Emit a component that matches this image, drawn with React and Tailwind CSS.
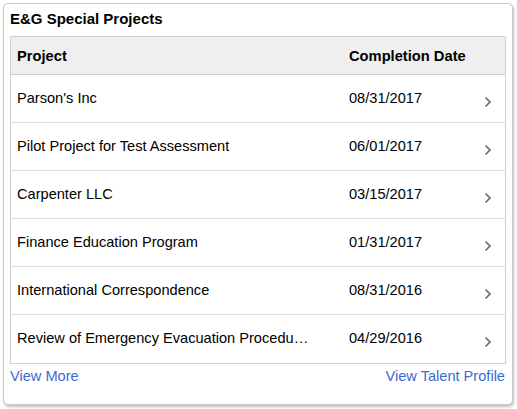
import React from "react";

const rows = [
  { name: "Parson's Inc", date: "08/31/2017" },
  { name: "Pilot Project for Test Assessment", date: "06/01/2017" },
  { name: "Carpenter LLC", date: "03/15/2017" },
  { name: "Finance Education Program", date: "01/31/2017" },
  { name: "International Correspondence", date: "08/31/2016" },
  { name: "Review of Emergency Evacuation Procedures", date: "04/29/2016" },
];

const Chevron = () => (
  <svg width="8" height="12" viewBox="0 0 8 12" fill="none">
    <path d="M1.5 1.5 L6 6 L1.5 10.5" stroke="#666" strokeWidth="1.6" />
  </svg>
);

export default function App() {
  return (
    <div className="bg-white w-[517px] h-[409px] pt-[3px] pl-[3px] font-['Liberation_Sans',Arial,sans-serif] text-[14.6px] text-black">
      <div className="w-[510px] h-[402px] border border-[#c8c8c8] rounded-[5px] bg-white shadow-[1px_2px_3px_rgba(0,0,0,0.25)] px-[6px]">
        <div className="h-[32px] pb-[2px] flex items-center text-[15px] font-bold">E&amp;G Special Projects</div>
        <div className="border border-[#cfcfcf]">
          <div className="flex h-[38px] items-center pt-[2px] bg-[#efefef] border-b border-[#cfcfcf] font-bold text-[14.7px]">
            <div className="w-[338px] pl-[6px]">Project</div>
            <div className="flex-1">Completion Date</div>
          </div>
          {rows.map((r, i) => (
            <div
              key={r.name}
              className={`flex h-[48px] items-center ${i < rows.length - 1 ? "border-b border-[#dcdcdc]" : ""}`}
            >
              <div className="w-[338px] pl-[6px] pr-[30px]">
                <div className="truncate w-[296px]">{r.name}</div>
              </div>
              <div className="w-[135px]">{r.date}</div>
              <div className="flex-1 flex items-center pt-[6px]">
                <Chevron />
              </div>
            </div>
          ))}
        </div>
        <div className="flex justify-between mt-[4px] pr-[1px] text-[#3b6bd4] leading-[16px]">
          <span>View More</span>
          <span>View Talent Profile</span>
        </div>
      </div>
    </div>
  );
}
